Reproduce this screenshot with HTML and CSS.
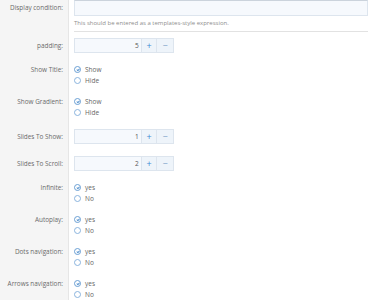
FILE: index.html
```html
<!DOCTYPE html>
<html>
<head>
<meta charset="utf-8">
<link rel="stylesheet" href="styles.css">
</head>
<body>
<div class="form">
  <div class="row row-first">
    <div class="label">Display condition:</div>
    <div class="field field-first">
      <div class="text-input"></div>
      <div class="hint">This should be entered as a templates-style expression.</div>
    </div>
  </div>

  <div class="row row-num">
    <div class="label">padding:</div>
    <div class="field">
      <div class="spinner"><div class="num">5</div><div class="btn plus">+</div><div class="btn minus">−</div></div>
    </div>
  </div>

  <div class="row">
    <div class="label">Show Title:</div>
    <div class="field">
      <div class="opt"><span class="radio on"></span>Show</div>
      <div class="opt"><span class="radio"></span>Hide</div>
    </div>
  </div>

  <div class="row">
    <div class="label">Show Gradient:</div>
    <div class="field">
      <div class="opt"><span class="radio on"></span>Show</div>
      <div class="opt"><span class="radio"></span>Hide</div>
    </div>
  </div>

  <div class="row row-num">
    <div class="label">Slides To Show:</div>
    <div class="field">
      <div class="spinner"><div class="num">1</div><div class="btn plus">+</div><div class="btn minus">−</div></div>
    </div>
  </div>

  <div class="row row-num">
    <div class="label">Slides To Scroll:</div>
    <div class="field">
      <div class="spinner"><div class="num">2</div><div class="btn plus">+</div><div class="btn minus">−</div></div>
    </div>
  </div>

  <div class="row">
    <div class="label">Infinite:</div>
    <div class="field">
      <div class="opt"><span class="radio on"></span>yes</div>
      <div class="opt"><span class="radio"></span>No</div>
    </div>
  </div>

  <div class="row">
    <div class="label">Autoplay:</div>
    <div class="field">
      <div class="opt"><span class="radio on"></span>yes</div>
      <div class="opt"><span class="radio"></span>No</div>
    </div>
  </div>

  <div class="row">
    <div class="label">Dots navigation:</div>
    <div class="field">
      <div class="opt"><span class="radio on"></span>yes</div>
      <div class="opt"><span class="radio"></span>No</div>
    </div>
  </div>

  <div class="row">
    <div class="label">Arrows navigation:</div>
    <div class="field">
      <div class="opt"><span class="radio on"></span>yes</div>
      <div class="opt"><span class="radio"></span>No</div>
    </div>
  </div>
</div>
</body>
</html>
```
FILE: styles.css
```css
html, body {
  margin: 0;
  padding: 0;
  background: #fff;
  font-family: "Open Sans", "Noto Sans", sans-serif;
  color: #666;
  font-size: 6.5px;
}
.form {
  display: flex;
  flex-direction: column;
  overflow: hidden;
  height: 300px;
}
.row {
  display: grid;
  grid-template-columns: 69px 1fr;
}
.label {
  background: #f5f5f5;
  border-right: 1px solid #e6e6e6;
  text-align: right;
  padding: 5px 5px 5px 0;
  line-height: 11px;
  font-size: 6.4px;
  color: #6a6a6a;
  white-space: nowrap;
}
.field {
  padding: 5px 5px 5px 5px;
}
.row-first .label {
  padding-top: 2px;
}
.field-first {
  padding-top: 0;
  padding-bottom: 0;
}
.field-first .hint {
  border-bottom: 1px solid #e2e2e2;
  padding: 3px 0 4px;
  line-height: 8px;
  font-size: 6px;
  color: #8e8e8e;
}
.text-input {
  height: 14px;
  border: 1px solid #dde5ee;
  border-top-color: #cbd3dc;
  background: #f6f9fd;
}
.row-num .label {
  padding-top: 8px;
  padding-bottom: 8px;
}
.row-num .field {
  padding-top: 6px;
  padding-bottom: 6px;
}
.spinner {
  display: flex;
  height: 15px;
  width: 100px;
}
.num {
  width: 65px;
  border: 1px solid #dde5ee;
  background: #f6f9fd;
  text-align: right;
  padding-right: 2px;
  line-height: 13px;
  color: #555;
}
.btn {
  width: 15px;
  border: 1px solid #dde5ee;
  border-left: none;
  background: #eef4fa;
  text-align: center;
  line-height: 13px;
  font-size: 9px;
}
.btn.plus { color: #3d8bd4; }
.btn.minus { color: #7aa0c8; width: 16px; }
.opt {
  display: flex;
  align-items: center;
  height: 11px;
  line-height: 11px;
  color: #666;
}
.radio {
  width: 5px;
  height: 5px;
  border: 1px solid #8ab4de;
  border-radius: 50%;
  margin: 0 4px 0 0;
  position: relative;
  flex: none;
}
.radio.on {
  border-color: #6a9fd4;
}
.radio.on::after {
  content: "";
  position: absolute;
  left: 1.5px;
  top: 0.5px;
  width: 1.2px;
  height: 2.4px;
  border: solid #5a95d0;
  border-width: 0 0.9px 0.9px 0;
  transform: rotate(45deg);
}
```
